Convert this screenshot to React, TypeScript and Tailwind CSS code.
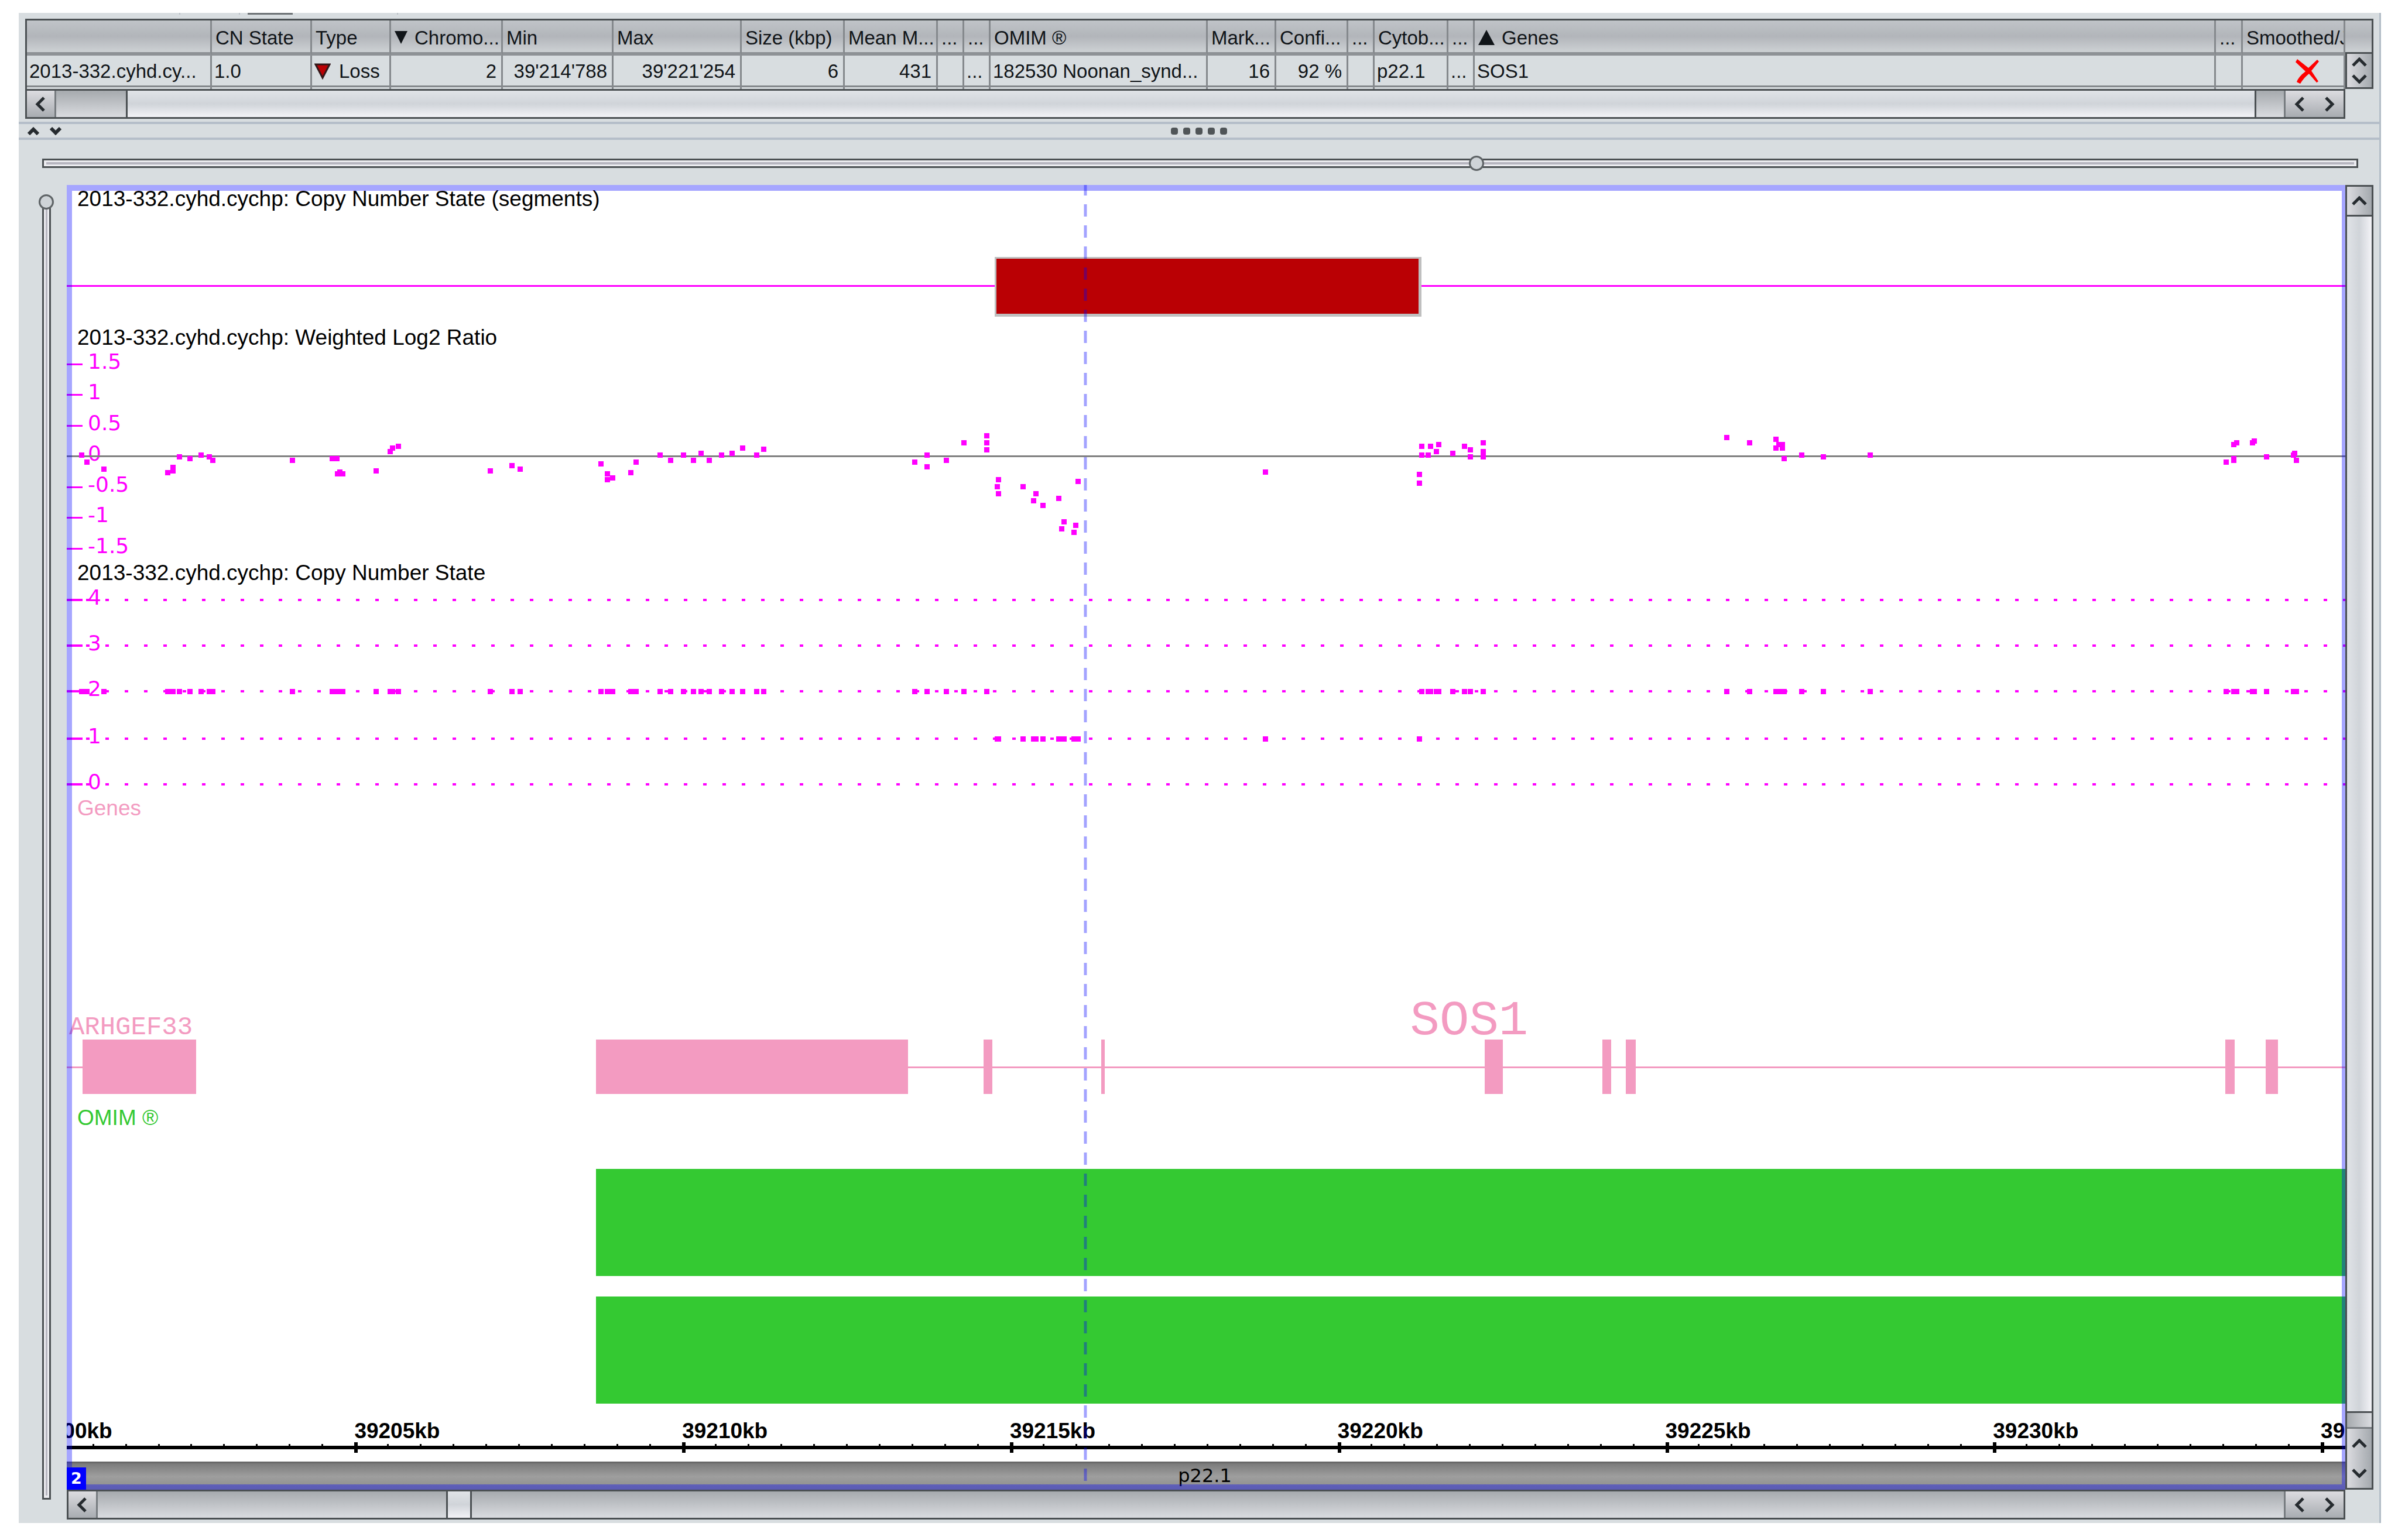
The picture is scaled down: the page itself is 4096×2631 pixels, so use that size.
import React from 'react';

// horizontal extent of the genome view, in data units
const VIEW_START = 117;
const VIEW_END = 4103;
const MAGENTA = '#ff00ff';
const PINK = '#f39bc1';
const GREEN = '#34c932';

const pct = (pos: number) => `${((pos - VIEW_START) / (VIEW_END - VIEW_START)) * 100}%`;
const span = (from: number, to: number) => `${((to - from) / (VIEW_END - VIEW_START)) * 100}%`;

// [position, weighted log2 ratio]
const markers: [number, number][] = [
  [143, 0.03], [152, -0.085], [182, -0.2], [293, -0.255], [302, -0.17], [302, -0.23], [314, 0],
  [332, -0.03], [352, 0.03], [366, 0], [372, -0.055], [511, -0.055], [581, -0.03], [589, -0.03],
  [590, -0.28], [594, -0.25], [599, -0.28], [658, -0.225], [682, 0.09], [686, 0.145], [697, 0.17],
  [857, -0.225], [895, -0.14], [910, -0.2], [1051, -0.11], [1062, -0.28], [1062, -0.37], [1071, -0.34],
  [1103, -0.255], [1112, -0.085], [1154, 0.03], [1173, -0.055], [1195, 0.03], [1213, -0.055],
  [1226, 0.06], [1240, -0.055], [1262, 0.03], [1280, 0.06], [1299, 0.145], [1323, 0.03], [1336, 0.12],
  [1600, -0.085], [1621, 0.03], [1621, -0.165], [1655, -0.055], [1686, 0.23], [1726, 0.345],
  [1726, 0.23], [1726, 0.115], [1746, -0.37], [1744, -0.485], [1746, -0.6], [1789, -0.485],
  [1812, -0.6], [1808, -0.71], [1824, -0.795], [1852, -0.68], [1861, -1.055], [1857, -1.17],
  [1882, -1.115], [1879, -1.23], [1886, -0.4], [2213, -0.25], [2483, -0.285], [2483, -0.425],
  [2487, 0.17], [2487, 0.03], [2502, 0.17], [2498, 0.03], [2517, 0.2], [2513, 0.09], [2541, 0.06],
  [2562, 0.17], [2572, 0.115], [2572, 0], [2594, 0.23], [2594, 0.09], [2594, 0], [3020, 0.315],
  [3060, 0.23], [3106, 0.285], [3106, 0.14], [3112, 0.2], [3118, 0.2], [3118, 0.14], [3121, -0.03],
  [3152, 0.03], [3189, 0], [3271, 0.03], [3894, -0.085], [3907, 0.2], [3913, 0.23], [3907, -0.03],
  [3907, -0.06], [3940, 0.23], [3943, 0.26], [3965, 0], [4012, 0.03], [4014, 0.06], [4017, -0.06],
];

// markers inside the lost segment have copy number 1
const isLost = (pos: number) => pos > 1740 && pos < 2485;

const exons: [number, number][] = [
  [145, 343], [1043, 1589], [1721, 1736], [1927, 1933], [2598, 2629],
  [2803, 2819], [2844, 2862], [3893, 3909], [3964, 3985],
];

const ratioTicks = [1.5, 1, 0.5, 0, -0.5, -1, -1.5];
const stateRows = [
  { state: 4, y: 70 },
  { state: 3, y: 148 },
  { state: 2, y: 226 },
  { state: 1, y: 307 },
  { state: 0, y: 385 },
];
const axisTicks = Array.from({ length: 71 }, (_, i) => ({ pos: 49 + i * 57.33, major: i % 10 === 0, kb: 39200 + i / 2 }));

interface Column {
  width: string;
  title: string;
  value: string;
  sort?: 'up' | 'down';
  right?: boolean;
  kind?: 'loss' | 'cross';
}

const columns: Column[] = [
  { width: 'w-[316px]', title: '', value: '2013-332.cyhd.cy...' },
  { width: 'w-[171px]', title: 'CN State', value: '1.0' },
  { width: 'w-[135px]', title: 'Type', value: 'Loss', kind: 'loss' },
  { width: 'w-[191px]', title: 'Chromo...', value: '2', sort: 'down', right: true },
  { width: 'w-[189px]', title: 'Min', value: "39'214'788", right: true },
  { width: 'w-[219px]', title: 'Max', value: "39'221'254", right: true },
  { width: 'w-[176px]', title: 'Size (kbp)', value: '6', right: true },
  { width: 'w-[159px]', title: 'Mean M...', value: '431', right: true },
  { width: 'w-[45px]', title: '...', value: '' },
  { width: 'w-[45px]', title: '...', value: '...' },
  { width: 'w-[371px]', title: 'OMIM ®', value: '182530 Noonan_synd...' },
  { width: 'w-[117px]', title: 'Mark...', value: '16', right: true },
  { width: 'w-[123px]', title: 'Confi...', value: '92 %', right: true },
  { width: 'w-[45px]', title: '...', value: '' },
  { width: 'w-[126px]', title: 'Cytob...', value: 'p22.1' },
  { width: 'w-[45px]', title: '...', value: '...' },
  { width: 'w-auto', title: 'Genes', value: 'SOS1', sort: 'up' },
  { width: 'w-[46px]', title: '...', value: '' },
  { width: 'w-[175px]', title: 'Smoothed/J', value: '', kind: 'cross' },
];

const chevrons = {
  left: '15,3 4,14 15,25',
  right: '4,3 15,14 4,25',
  up: '3,14 14,3 25,14',
  down: '3,3 14,14 25,3',
};

const Chevron: React.FC<{ dir: keyof typeof chevrons }> = ({ dir }) => {
  const horizontal = dir === 'left' || dir === 'right';
  return (
    <svg width={horizontal ? 19 : 28} height={horizontal ? 28 : 17} aria-hidden="true">
      <polyline points={chevrons[dir]} fill="none" stroke="#262b2f" strokeWidth={5} />
    </svg>
  );
};

const ScrollButton: React.FC<{ dir: keyof typeof chevrons; className?: string }> = ({ dir, className = '' }) => (
  <button type="button" aria-label={`Scroll ${dir}`} className={`flex items-center justify-center ${className}`}>
    <Chevron dir={dir} />
  </button>
);

const TRACK_X = 'bg-linear-to-b from-[#a6aaae] to-[#dadce0]';
const THUMB_X = 'border-x-3 border-[#4b5053] bg-linear-to-b from-[#e0e3e7] via-[#d0d4d9] to-[#f3f3f7]';
const BUTTON_X = 'bg-linear-to-b from-[#dcdce0] to-[#a8acb1]';
const BUTTON_Y = 'bg-linear-to-r from-[#dcdce0] to-[#a4a9ae]';

const HScroll: React.FC<{ before: string; thumb: string; after: string }> = ({ before, thumb, after }) => (
  <div className="flex border-3 border-[#4b5053]">
    <ScrollButton dir="left" className={`w-[50px] border-r-3 border-[#777c80] ${BUTTON_X}`} />
    <div className={`${TRACK_X} ${before}`} />
    <div className={`${THUMB_X} ${thumb}`} />
    <div className={`${TRACK_X} ${after}`} />
    <div className={`flex w-[102px] border-l-3 border-[#777c80] ${BUTTON_X}`}>
      <ScrollButton dir="left" className="flex-1" />
      <ScrollButton dir="right" className="flex-1" />
    </div>
  </div>
);

const SegmentTable = () => (
  <table className="w-full table-fixed border-separate border-spacing-0 text-left text-[33px] leading-[38px] text-[#101418]">
    <colgroup>
      {columns.map((c, i) => (
        <col key={i} className={c.width} />
      ))}
    </colgroup>
    <thead>
      <tr className="h-[60px]">
        {columns.map((c, i) => (
          <th
            key={i}
            className="overflow-hidden border-r-3 border-b-6 border-r-[#85898d] border-b-[#8e9296] bg-linear-to-b from-[#c0c4c8] via-[#b2b5ba] to-[#cdd1d4] pt-1.5 pr-0 pl-1.5 font-normal whitespace-nowrap"
          >
            <span className="flex items-center gap-3">
              {c.sort === 'down' && (
                <svg width="22" height="24" className="flex-none" aria-hidden="true">
                  <polygon points="0,0 22,0 11,22" fill="#101418" />
                </svg>
              )}
              {c.sort === 'up' && (
                <svg width="28" height="28" className="flex-none" aria-hidden="true">
                  <polygon points="0,26 28,26 14,0" fill="#101418" />
                </svg>
              )}
              {c.title}
            </span>
          </th>
        ))}
      </tr>
    </thead>
    <tbody>
      <tr className="h-[54px]">
        {columns.map((c, i) => (
          <td
            key={i}
            className={`overflow-hidden border-r-3 border-b-3 border-[#85898d] py-0 pt-0.5 pl-1 whitespace-nowrap ${c.right ? 'pr-2 text-right' : ''}`}
          >
            {c.kind === 'loss' && (
              <span className="flex items-center gap-3.5">
                <svg width="28" height="28" aria-hidden="true">
                  <polygon points="2,2 26,2 14,25" fill="#ba0004" stroke="#33181a" strokeWidth={3} />
                </svg>
                {c.value}
              </span>
            )}
            {c.kind === 'cross' && (
              <svg width="40" height="42" viewBox="0 0 40 42" className="ml-[86px]" role="img" aria-label="No">
                <path d="M3 0 L0 5 L17 21 Q5 30 2 39 L8 42 Q14 32 23 25 L36 40 L39 38 L27 20 L40 4 L37 1 L22 15 Z" fill="#ff0000" />
              </svg>
            )}
            {!c.kind && c.value}
          </td>
        ))}
      </tr>
      <tr className="h-[3px]" aria-hidden="true">
        {columns.map((_, i) => (
          <td key={i} className="border-r-3 border-[#85898d] p-0" />
        ))}
      </tr>
    </tbody>
  </table>
);

const Track: React.FC<{ label?: string; height: string; color?: string; children: React.ReactNode }> = ({
  label,
  height,
  color = 'text-black',
  children,
}) => (
  <section className={`grid grid-cols-1 grid-rows-1 ${height}`}>
    {label && (
      <h2 className={`col-start-1 row-start-1 pt-[3px] pl-[18px] text-[37px] leading-[42px] ${color}`}>{label}</h2>
    )}
    <svg className="col-start-1 row-start-1 h-full w-full" shapeRendering="crispEdges">
      {children}
    </svg>
  </section>
);

const Plot = () => (
  <div className="relative overflow-hidden bg-white">
    <Track label="2013-332.cyhd.cychp: Copy Number State (segments)" height="h-[237px]">
      <rect x="0" y="171" width="100%" height="3" fill={MAGENTA} />
      <rect x={pct(1740)} y="123" width={span(1740, 2487)} height="102" fill="#bfbfbf" />
      <rect x={pct(1743)} y="126" width={span(1743, 2482)} height="94" fill="#ba0004" />
    </Track>

    <Track label="2013-332.cyhd.cychp: Weighted Log2 Ratio" height="h-[402px]">
      {ratioTicks.map((t) => (
        <g key={t} fill={MAGENTA}>
          <rect x="0" y={225 - t * 105} width="27" height="3" />
          <text x="36" y={234 - t * 105} className="font-['DejaVu_Sans',sans-serif] text-[36px]">
            {t}
          </text>
        </g>
      ))}
      <rect x="0" y="225" width="100%" height="3" fill="#808080" />
      <g fill={MAGENTA} transform="translate(-4 -4)">
        {markers.map(([pos, v], i) => (
          <rect key={i} x={pct(pos)} y={Math.round(227 - v * 105)} width="9" height="9" />
        ))}
      </g>
    </Track>

    <Track label="2013-332.cyhd.cychp: Copy Number State" height="h-[402px]">
      {stateRows.map(({ state, y }) => (
        <g key={state} fill={MAGENTA}>
          <line x1="0" x2="100%" y1={y} y2={y} stroke={MAGENTA} strokeWidth={4} strokeDasharray="6 26.95" />
          <rect x="0" y={y - 2} width="27" height="4" />
          <text x="36" y={y + 8} className="font-['DejaVu_Sans',sans-serif] text-[36px]">
            {state}
          </text>
        </g>
      ))}
      <g fill={MAGENTA} transform="translate(-4 -4)">
        {markers.map(([pos], i) => (
          <rect key={i} x={pct(pos)} y={isLost(pos) ? 307 : 226} width="9" height="9" />
        ))}
      </g>
    </Track>

    <Track label="Genes" height="h-[529px]" color="text-[#f39bc1]">
      <g fill={PINK}>
        <rect x="0" y="465" width={span(117, 145)} height="3" />
        <rect x={pct(1589)} y="465" width={span(1589, 4103)} height="3" />
        {exons.map(([from, to]) => (
          <rect key={from} x={pct(from)} y="419" width={span(from, to)} height="93" />
        ))}
        <g className="font-['Courier_New','Liberation_Mono',monospace]">
          <text x={pct(121)} y="410" className="text-[44px]">ARHGEF33</text>
          <text x={pct(2467)} y="410" className="text-[84px]">SOS1</text>
        </g>
      </g>
    </Track>

    <Track label="OMIM ®" height="h-[528px]" color="text-[#34c932]">
      <rect x={pct(1043)} y="111" width={span(1043, 4103)} height="183" fill={GREEN} />
      <rect x={pct(1043)} y="329" width={span(1043, 4103)} height="183" fill={GREEN} />
    </Track>

    {/* genome axis */}
    <Track height="h-[83px]">
      <rect x="0" y="56" width="100%" height="6" />
      {axisTicks.map((t) => (
        <g key={t.kb} transform="translate(-2 0)">
          <rect x={pct(t.pos)} y={t.major ? 50 : 53} width={t.major ? 6 : 3} height={t.major ? 18 : 6} />
          {t.major && (
            <text x={pct(t.pos)} y="43" className="text-[37px] font-bold">
              {`${t.kb}kb`}
            </text>
          )}
        </g>
      ))}
    </Track>

    {/* cytoband */}
    <div className="relative flex h-[48px] items-center justify-center border-t-3 border-[#686868] bg-linear-to-b from-[#7a7a7a] via-[#9e9e9e] to-[#8c8c8c] pr-1 pb-1 font-['DejaVu_Sans',sans-serif] text-[32px] leading-[36px]">
      p22.1
      <span className="absolute bottom-0 left-0 z-10 flex h-[38px] w-[33px] items-center justify-center bg-[#0000ff] text-[27px] font-bold text-white">
        2
      </span>
    </div>

    {/* selection frame and cursor lie over all tracks */}
    <div className="pointer-events-none absolute inset-0 border-t-10 border-r-6 border-b-9 border-l-9 border-[#0000ff]/35" />
    <svg className="pointer-events-none absolute inset-0 h-full w-full" aria-hidden="true">
      <line x1={pct(1899)} x2={pct(1899)} y1="0" y2="2214" stroke="#0000ff" strokeOpacity={0.36} strokeWidth={5} strokeDasharray="21 15" strokeDashoffset={3} />
    </svg>
  </div>
);

const THUMB =
  '[&::-webkit-slider-thumb]:h-[26px] [&::-webkit-slider-thumb]:w-[26px] [&::-webkit-slider-thumb]:appearance-none [&::-webkit-slider-thumb]:rounded-full [&::-webkit-slider-thumb]:border-3 [&::-webkit-slider-thumb]:border-[#5e6366] [&::-webkit-slider-thumb]:bg-[#ced3d7]';

const App = () => (
  <div className="min-h-screen bg-white pt-[22px] pr-[29px] pl-8 font-['Liberation_Sans',Arial,sans-serif]">
    <main className="border-r-3 border-[#b3bdc7] bg-[#d8dde0] pb-1.5">
      {/* lower edge of the toolbar */}
      <div className="flex h-[10px] items-start pl-[274px]">
        <div className="h-[3px] w-[2px] bg-[#bcc2c7]" />
        <div className="ml-[100px] h-[3px] w-[2px] bg-[#bcc2c7]" />
        <div className="ml-[13px] h-[3px] w-[77px] bg-[#6c7174]" />
        <div className="ml-[178px] h-[3px] w-[2px] bg-[#bcc2c7]" />
      </div>

      <div className="mr-[10px] ml-[11px] grid grid-cols-[minmax(0,1fr)_48px]">
        <div className="border-t-3 border-l-3 border-[#4b5053]">
          <SegmentTable />
        </div>
        <div className="flex flex-col">
          <div className="h-[57px] border-t-3 border-r-3 border-[#4b5053] bg-linear-to-b from-[#c0c4c8] via-[#b2b5ba] to-[#cdd1d4]" />
          <div className={`flex flex-1 flex-col border-3 border-[#4b5053] ${BUTTON_Y}`}>
            <ScrollButton dir="up" className="flex-1" />
            <ScrollButton dir="down" className="flex-1" />
          </div>
        </div>
        <div className="grid h-[51px]">
          <HScroll before="w-[119px]" thumb="flex-1" after="w-[47px]" />
        </div>
      </div>

      {/* split pane divider */}
      <div className="mt-[5px] flex h-[31px] items-center border-y-4 border-[#b5bec9] px-3.5">
        <div className="flex flex-1 gap-4">
          <button type="button" aria-label="Collapse table">
            <svg width="22" height="14" aria-hidden="true">
              <polyline points="3,12 11,4 19,12" fill="none" stroke="#262b2f" strokeWidth={6} />
            </svg>
          </button>
          <button type="button" aria-label="Expand table">
            <svg width="22" height="14" aria-hidden="true">
              <polyline points="3,2 11,10 19,2" fill="none" stroke="#262b2f" strokeWidth={6} />
            </svg>
          </button>
        </div>
        <div className="flex gap-[9px]">
          {[0, 1, 2, 3, 4].map((i) => (
            <span key={i} className="size-3 rounded-sm bg-[#505558]" />
          ))}
        </div>
        <div className="flex-1" />
      </div>

      <div className="mt-[26px] mr-9 mb-[23px] ml-10 grid h-[28px] items-center">
        <div className="col-start-1 row-start-1 flex h-4 items-center border-3 border-[#4b5053] bg-[#ececf0] px-1">
          <div className="h-[4px] flex-1 bg-[#b6b5bf]" />
        </div>
        <input
          type="range"
          aria-label="Horizontal zoom"
          min={0}
          max={1000}
          defaultValue={620}
          className={`col-start-1 row-start-1 w-full appearance-none bg-transparent ${THUMB}`}
        />
      </div>

      <div className="mr-[10px] grid grid-cols-[82px_minmax(0,1fr)_48px]">
        <div className="row-span-2 mt-4 mb-[34px] ml-[34px] grid w-[26px] justify-center">
          <div className="col-start-1 row-start-1 mx-auto mt-[13px] flex w-[15px] justify-center border-3 border-[#4b5053] bg-[#ececf0] py-1">
            <div className="w-[3px] bg-[#b6b5bf]" />
          </div>
          <input
            type="range"
            aria-label="Vertical zoom"
            min={0}
            max={1000}
            defaultValue={0}
            className={`col-start-1 row-start-1 h-full w-[26px] appearance-none bg-transparent [writing-mode:vertical-lr] ${THUMB}`}
          />
        </div>

        <Plot />

        <div className="flex flex-col border-3 border-[#4b5053]">
          <ScrollButton dir="up" className={`h-[48px] ${BUTTON_Y}`} />
          <div className="flex-1 border-y-3 border-[#4b5053] bg-linear-to-r from-[#e0e3e7] via-[#d0d4d9] to-[#f3f3f7]" />
          <div className="h-[24px] bg-linear-to-r from-[#a6aaae] to-[#dadce0]" />
          <div className={`flex h-[104px] flex-col border-t-3 border-[#777c80] ${BUTTON_Y}`}>
            <ScrollButton dir="up" className="flex-1" />
            <ScrollButton dir="down" className="flex-1" />
          </div>
        </div>

        <div className="col-start-2 grid h-[51px]">
          <HScroll before="w-[15.3%]" thumb="w-[44px]" after="flex-1" />
        </div>
      </div>
    </main>
  </div>
);

export default App;
